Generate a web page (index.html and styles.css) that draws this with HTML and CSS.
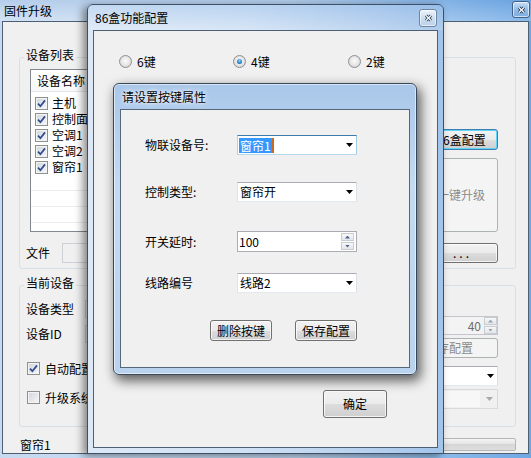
FILE: index.html
```html
<!DOCTYPE html>
<html>
<head>
    <meta http-equiv="Content-Type" content="text/html; charset=utf-8" />
    <title>固件升级</title>
    <link rel="stylesheet" href="styles.css">
</head>
<body>

<div class="desktop">

    <!-- 主窗口：固件升级 -->
    <div class="ui-win ui-win-main">
        <div class="ui-win-title">
            固件升级
            <a href="#" class="ui-win-close ui-win-close-main"><svg width="9" height="8" viewBox="0 0 9 8"><path d="M2 1.5L7 6.5M7 1.5L2 6.5" stroke="#1c3148" stroke-width="3"/><path d="M2 1.5L7 6.5M7 1.5L2 6.5" stroke="#fff" stroke-width="1.3"/></svg></a>
        </div>
        <div class="ui-win-client">

            <fieldset class="ui-group ui-group-list">
                <legend>设备列表</legend>
                <div class="ui-list-grid">
                    <div class="ui-listview">
                        <div class="ui-listview-head">设备名称</div>
                        <div class="ui-listview-body">
                            <div class="ui-listview-row"><span class="ui-check"><svg width="9" height="9" viewBox="0 0 9 9"><path d="M1 4.6L3.4 7.2L8 1.4" fill="none" stroke="#2f4f90" stroke-width="1.8"/></svg></span>主机</div>
                            <div class="ui-listview-row"><span class="ui-check"><svg width="9" height="9" viewBox="0 0 9 9"><path d="M1 4.6L3.4 7.2L8 1.4" fill="none" stroke="#2f4f90" stroke-width="1.8"/></svg></span>控制面板</div>
                            <div class="ui-listview-row"><span class="ui-check"><svg width="9" height="9" viewBox="0 0 9 9"><path d="M1 4.6L3.4 7.2L8 1.4" fill="none" stroke="#2f4f90" stroke-width="1.8"/></svg></span>空调1</div>
                            <div class="ui-listview-row"><span class="ui-check"><svg width="9" height="9" viewBox="0 0 9 9"><path d="M1 4.6L3.4 7.2L8 1.4" fill="none" stroke="#2f4f90" stroke-width="1.8"/></svg></span>空调2</div>
                            <div class="ui-listview-row"><span class="ui-check"><svg width="9" height="9" viewBox="0 0 9 9"><path d="M1 4.6L3.4 7.2L8 1.4" fill="none" stroke="#2f4f90" stroke-width="1.8"/></svg></span>窗帘1</div>
                            <div class="ui-listview-row ui-listview-empty"></div>
                            <div class="ui-listview-row ui-listview-empty"></div>
                            <div class="ui-listview-row ui-listview-empty"></div>
                        </div>
                    </div>
                    <div class="ui-side-btns">
                        <a href="#" class="ui-btn ui-btn-default ui-btn-side">86盒配置</a>
                        <a href="#" class="ui-btn ui-btn-disabled ui-btn-upgrade">一键升级</a>
                    </div>
                    <div class="ui-file-row">
                        <span class="ui-file-label">文件</span>
                        <span class="ui-edit ui-edit-readonly ui-edit-file"></span>
                    </div>
                    <a href="#" class="ui-btn ui-btn-browse">...</a>
                </div>
            </fieldset>

            <fieldset class="ui-group ui-group-dev">
                <legend>当前设备</legend>
                <div class="ui-dev-grid">
                    <div class="ui-dev-left">
                        <div class="ui-field-row">
                            <span class="ui-field-label">设备类型</span>
                            <span class="ui-edit ui-edit-readonly ui-edit-dev"></span>
                        </div>
                        <div class="ui-field-row ui-field-row-id">
                            <span class="ui-field-label">设备ID</span>
                            <span class="ui-edit ui-edit-readonly ui-edit-dev"></span>
                        </div>
                        <div class="ui-check-row ui-check-row-auto"><span class="ui-check"><svg width="9" height="9" viewBox="0 0 9 9"><path d="M1 4.6L3.4 7.2L8 1.4" fill="none" stroke="#2f4f90" stroke-width="1.8"/></svg></span>自动配置</div>
                        <div class="ui-check-row ui-check-row-sys"><span class="ui-check"></span>升级系统</div>
                    </div>
                    <div class="ui-dev-right">
                        <div class="ui-spin ui-spin-disabled">
                            <span class="ui-spin-text">40</span>
                            <span class="ui-spin-btns"><i class="ui-spin-up"></i><i class="ui-spin-down"></i></span>
                        </div>
                        <a href="#" class="ui-btn ui-btn-disabled ui-btn-save">保存配置</a>
                        <div class="ui-combo ui-combo-line"><span class="ui-combo-arrow"></span></div>
                        <div class="ui-combo ui-combo-disabled"><span class="ui-combo-inner"></span><span class="ui-combo-arrow"></span></div>
                    </div>
                </div>
            </fieldset>

            <div class="ui-status">
                <span class="ui-status-text">窗帘1</span>
                <div class="ui-progress"></div>
            </div>
        </div>
    </div>

    <!-- 86盒功能配置 -->
    <div class="ui-win ui-win-box">
        <div class="ui-win-title">
            86盒功能配置
            <a href="#" class="ui-win-close"><svg width="9" height="8" viewBox="0 0 9 8"><path d="M2 1.5L7 6.5M7 1.5L2 6.5" stroke="#243a52" stroke-width="3"/><path d="M2 1.5L7 6.5M7 1.5L2 6.5" stroke="#fff" stroke-width="1.3"/></svg></a>
        </div>
        <div class="ui-win-client">
            <div class="ui-radio-row">
                <label class="ui-radio-item"><span class="ui-radio"></span>6键</label>
                <label class="ui-radio-item"><span class="ui-radio ui-radio-on"></span>4键</label>
                <label class="ui-radio-item"><span class="ui-radio"></span>2键</label>
            </div>
            <div class="ui-box-foot">
                <a href="#" class="ui-btn ui-btn-ok">确定</a>
            </div>
        </div>
    </div>

    <!-- 请设置按键属性 -->
    <div class="ui-win ui-win-key">
        <div class="ui-win-title">请设置按键属性</div>
        <div class="ui-win-client">
            <div class="ui-key-form">
                <div class="ui-key-row ui-key-row-1">
                    <span class="ui-key-label">物联设备号:</span>
                    <div class="ui-combo ui-combo-focus"><span class="ui-combo-sel">窗帘1</span><span class="ui-combo-caret"></span><span class="ui-combo-arrow"></span></div>
                </div>
                <div class="ui-key-row ui-key-row-2">
                    <span class="ui-key-label">控制类型:</span>
                    <div class="ui-combo"><span class="ui-combo-text">窗帘开</span><span class="ui-combo-arrow"></span></div>
                </div>
                <div class="ui-key-row ui-key-row-3">
                    <span class="ui-key-label">开关延时:</span>
                    <div class="ui-spin">
                        <span class="ui-spin-text">100</span>
                        <span class="ui-spin-btns"><i class="ui-spin-up"></i><i class="ui-spin-down"></i></span>
                    </div>
                </div>
                <div class="ui-key-row ui-key-row-4">
                    <span class="ui-key-label">线路编号</span>
                    <div class="ui-combo"><span class="ui-combo-text">线路2</span><span class="ui-combo-arrow"></span></div>
                </div>
                <div class="ui-key-btns">
                    <a href="#" class="ui-btn ui-btn-key">删除按键</a>
                    <a href="#" class="ui-btn ui-btn-key">保存配置</a>
                </div>
            </div>
        </div>
    </div>

</div>

</body>
</html>
```

FILE: styles.css
```css
body{
    margin: 0px;padding: 0px;
    font-size: 12px;line-height: 14px;
    font-family: "Noto Sans CJK SC", "Liberation Sans", sans-serif;
    color: #000;background: #5a86b8;
    overflow: hidden;
}
a{color: #000;text-decoration: none;}

.desktop{
    position: relative;width: 531px;height: 458px;overflow: hidden;
}

/*窗口公共样式*/
.ui-win{
    position: absolute;box-sizing: border-box;
    display: flex;flex-direction: column;
}
.ui-win-title{
    position: relative;flex: none;
    white-space: nowrap;user-select: none;
}
.ui-win-client{
    flex: 1;min-height: 0;
    position: relative;
    display: flex;flex-direction: column;
    background: #f0f0f0;border: 1px solid #4c5f73;
}

/*关闭按钮*/
.ui-win-close{
    position: absolute;
    width: 18px;height: 18px;box-sizing: border-box;
    display: flex;align-items: center;justify-content: center;
    border: 1px solid #6c86a2;border-radius: 3px;
    background: linear-gradient(#eef4fb, #cadcf0 55%, #bcd3ec);
    box-shadow: inset 0 0 0 1px rgba(255,255,255,.6);
}
.ui-win-close-main{
    border-color: #3f6288;
    background: linear-gradient(#c9dff5, #8fb9e6 55%, #7eaee2);
}

/*主窗口*/
.ui-win-main{
    left: 0px;top: 0px;width: 531px;height: 458px;
    padding: 0px 2px 4px;
    background: linear-gradient(to right, #c7daf0 0%, #bfd6ef 55%, #8ebbe9 82%, #6ea8e4 100%);
}
.ui-win-main .ui-win-title{
    height: 21px;line-height: 21px;
    margin: 0px -2px;padding-left: 4px;
    background: linear-gradient(rgba(60,120,200,.12), rgba(255,255,255,.2));
}
.ui-win-main .ui-win-close{right: 1px;top: 1px;height: 17px;}

/*分组框*/
.ui-group{
    margin: 0px;min-inline-size: 0;
    border: 1px solid #d5dfe5;border-radius: 3px;
}
.ui-group legend{
    padding: 0px 2px 4px;margin-left: -2px;
    line-height: 14px;
}
.ui-group-list{
    margin: 26px 12px 0px 16px;
    padding: 3px 17px 5px 6px;
}
.ui-group-dev{
    margin: 7px 12px 0px 16px;
    padding: 6px 17px 17px 6px;
}

.ui-list-grid{
    display: grid;
    grid-template-columns: 1fr 74px;
    grid-template-rows: 163px 20px;
    column-gap: 10px;row-gap: 11px;
}

/*设备列表*/
.ui-listview{
    margin-left: 4px;
    border: 1px solid #828790;background: #fff;
    overflow: hidden;
}
.ui-listview-head{
    height: 22px;box-sizing: border-box;
    padding: 4px 0px 0px 6px;line-height: 14px;
    border-bottom: 1px solid #e5e5e5;
    background: linear-gradient(#fff, #f7f8fa);
}
.ui-listview-body{padding-top: 3px;}
.ui-listview-row{
    height: 16px;box-sizing: border-box;
    display: flex;align-items: center;gap: 4px;
    padding-left: 4px;
}
.ui-listview-empty{border-bottom: 1px solid #ececec;}

/*复选框*/
.ui-check{
    flex: none;
    width: 13px;height: 13px;box-sizing: border-box;
    display: flex;align-items: center;justify-content: center;
    border: 1px solid #8e8f8f;
    background: linear-gradient(135deg, #d0d4dc, #f7f7f9);
    box-shadow: inset 0 0 0 1px #f4f4f4;
}

.ui-side-btns{
    display: flex;flex-direction: column;justify-content: flex-end;gap: 8px;
}
.ui-btn-side{height: 21px;}
.ui-btn-upgrade{height: 74px;}

.ui-file-row{display: flex;align-items: center;}
.ui-file-label{width: 36px;flex: none;}
.ui-edit{
    display: block;box-sizing: border-box;
    border: 1px solid #c9cdd2;background: #fff;
}
.ui-edit-readonly{background: #f0f0f0;border-color: #cdd1d6;}
.ui-edit-file{flex: 1;height: 20px;}
.ui-btn-browse{letter-spacing: 3px;padding-left: 3px;}

/*按钮*/
.ui-btn{
    display: flex;align-items: center;justify-content: center;
    box-sizing: border-box;
    border: 1px solid #707070;border-radius: 3px;
    background: linear-gradient(#f2f2f2 0%, #ebebeb 50%, #dddddd 50%, #cfcfcf 100%);
    box-shadow: inset 0 0 0 1px rgba(255,255,255,.75);
    line-height: 14px;white-space: nowrap;
}
.ui-btn-default{
    border-color: #3c7fb1;
    box-shadow: inset 0 0 0 1px #5fd3f8;
}
.ui-btn-disabled{
    border-color: #adb2b5;background: #f4f4f4;color: #8b8b8b;
    box-shadow: none;
}

/*当前设备*/
.ui-dev-grid{
    display: grid;grid-template-columns: 1fr 98px;column-gap: 10px;
    align-items: start;
}
.ui-field-row{display: flex;align-items: center;height: 18px;}
.ui-field-row-id{margin-top: 7px;}
.ui-field-label{width: 59px;flex: none;}
.ui-edit-dev{width: 220px;height: 18px;}
.ui-check-row{display: flex;align-items: center;gap: 5px;height: 13px;padding-left: 1px;}
.ui-check-row-auto{margin-top: 19px;}
.ui-check-row-sys{margin-top: 16px;}

.ui-dev-right{display: flex;flex-direction: column;margin-top: 16px;}
.ui-dev-right .ui-spin{height: 19px;}
.ui-btn-save{height: 20px;margin-top: 3px;}
.ui-combo-line{height: 19px;margin-top: 8px;}
.ui-combo-disabled{height: 19px;margin-top: 3px;}

/*组合框*/
.ui-combo{
    width: 100%;height: 20px;box-sizing: border-box;
    display: flex;align-items: center;
    padding-left: 1px;
    border: 1px solid;border-color: #abadb3 #dbdfe6 #e3e9ef #e2e3ea;
    background: #fff;
}
.ui-combo-arrow{
    flex: none;margin-left: auto;margin-right: 3px;
    width: 7px;height: 4px;background: #000;
    clip-path: polygon(0 0, 100% 0, 50% 100%);
}
.ui-combo-focus{border-color: #3d7bad #a4c9e3 #b7d9ed #b5cfe7;}
.ui-combo-sel{background: #3399ff;color: #fff;padding: 0px 1px;line-height: 15px;}
.ui-combo-caret{width: 2px;height: 15px;background: #c96a1e;}
.ui-combo-text{padding-left: 1px;}
.ui-combo-disabled{
    border-color: #d9d9d9;background: #f0f0f0;padding: 1px;
}
.ui-combo-disabled .ui-combo-inner{flex: 1;align-self: stretch;background: #f7f7f7;margin-right: 18px;}
.ui-combo-disabled .ui-combo-arrow{background: #a9a9a9;margin-left: -12px;}

/*数字输入框*/
.ui-spin{
    height: 21px;box-sizing: border-box;
    display: flex;align-items: center;
    padding-left: 1px;
    border: 1px solid #abadb3;background: #fff;
}
.ui-spin-text{flex: 1;}
.ui-spin-btns{
    flex: none;margin-right: 2px;
    display: flex;flex-direction: column;gap: 1px;
}
.ui-spin-btns i{
    width: 13px;height: 8px;box-sizing: border-box;
    display: flex;align-items: center;justify-content: center;
    border: 1px solid #c8ccd3;
    background: linear-gradient(#f7f7f7, #e4e6ea);
}
.ui-spin-btns i::after{
    content: "";width: 5px;height: 3px;background: #4c6194;
}
.ui-spin-up::after{clip-path: polygon(50% 0, 100% 100%, 0 100%);}
.ui-spin-down::after{clip-path: polygon(0 0, 100% 0, 50% 100%);}
.ui-spin-disabled{border-color: #c3c6ca;background: #f3f3f3;color: #6d6d6d;}
.ui-spin-disabled .ui-spin-text{text-align: right;padding-right: 3px;}
.ui-spin-disabled .ui-spin-btns{margin-right: 0px;}
.ui-spin-disabled .ui-spin-btns i::after{background: #9aa0aa;}

/*状态栏*/
.ui-status{
    display: flex;align-items: center;
    height: 13px;margin: 11px 12px 0px 17px;
}
.ui-status-text{width: 80px;flex: none;}
.ui-progress{
    flex: 1;height: 13px;box-sizing: border-box;
    border: 1px solid #b6b6b6;border-radius: 2px;
    background: linear-gradient(#f4f4f4, #e4e4e4 50%, #d6d6d6 50%, #dedede);
}

/*86盒功能配置*/
.ui-win-box{
    left: 87px;top: 4px;width: 357px;height: 450px;
    padding: 0px 5px 5px;
    border: 1px solid #3e5065;border-radius: 6px 6px 0px 0px;
    background: linear-gradient(to right, #dce8f6 0%, #d0e1f4 45%, #b6d0ee 80%, #a2c4ea 100%);
    box-shadow: -4px 2px 8px rgba(0,0,0,.45);
}
.ui-win-box .ui-win-title{
    height: 25px;line-height: 25px;
    margin: 0px -5px;padding-left: 7px;
    background: linear-gradient(rgba(120,170,230,.25), rgba(255,255,255,.15));
}
.ui-win-box .ui-win-close{right: 6px;top: 4px;}

.ui-radio-row{
    display: grid;grid-template-columns: 114px 115px auto;
    padding: 24px 0px 0px 25px;
}
.ui-radio-item{display: flex;align-items: center;gap: 5px;height: 13px;}
.ui-radio{
    flex: none;
    width: 13px;height: 13px;box-sizing: border-box;border-radius: 50%;
    display: flex;align-items: center;justify-content: center;
    border: 1px solid #8e8f8f;
    background: radial-gradient(circle at 50% 45%, #fbfbfb 0%, #e9e9e9 45%, #c9c9c9 100%);
}
.ui-radio-on::after{
    content: "";width: 5px;height: 5px;border-radius: 50%;
    background: radial-gradient(circle at 50% 35%, #9ad6ff 0%, #2d8ad4 50%, #165089 100%);
}

.ui-box-foot{
    margin-top: auto;
    display: flex;justify-content: flex-end;
    padding: 0px 50px 29px 0px;
}
.ui-btn-ok{width: 64px;height: 28px;}

/*请设置按键属性*/
.ui-win-key{
    left: 113px;top: 83px;width: 304px;height: 292px;
    padding: 0px 6px 6px;
    border: 1px solid #394858;border-radius: 6px;
    background: linear-gradient(#a9c7ea 0%, #c3daf2 35%, #b9d3ef 100%);
    box-shadow: 3px 5px 12px 1px rgba(0,0,0,.6), inset 0 0 0 1px rgba(255,255,255,.55);
}
.ui-win-key .ui-win-title{
    height: 25px;line-height: 25px;
    margin: 0px -6px;padding-left: 8px;
    text-shadow: 0 0 6px #fff, 0 0 3px #fff;
}
.ui-win-key .ui-win-client{border-color: #56677a;}

.ui-key-form{padding: 25px 0px 0px 24px;}
.ui-key-row{display: flex;align-items: center;}
.ui-key-label{width: 92px;flex: none;}
.ui-key-row .ui-combo,
.ui-key-row .ui-spin{width: 120px;}
.ui-key-row-2{margin-top: 27px;}
.ui-key-row-3{margin-top: 29px;}
.ui-key-row-4{margin-top: 21px;}
.ui-key-btns{
    width: 212px;margin-top: 27px;
    display: flex;justify-content: flex-end;gap: 23px;
}
.ui-btn-key{width: 62px;height: 21px;}
```
